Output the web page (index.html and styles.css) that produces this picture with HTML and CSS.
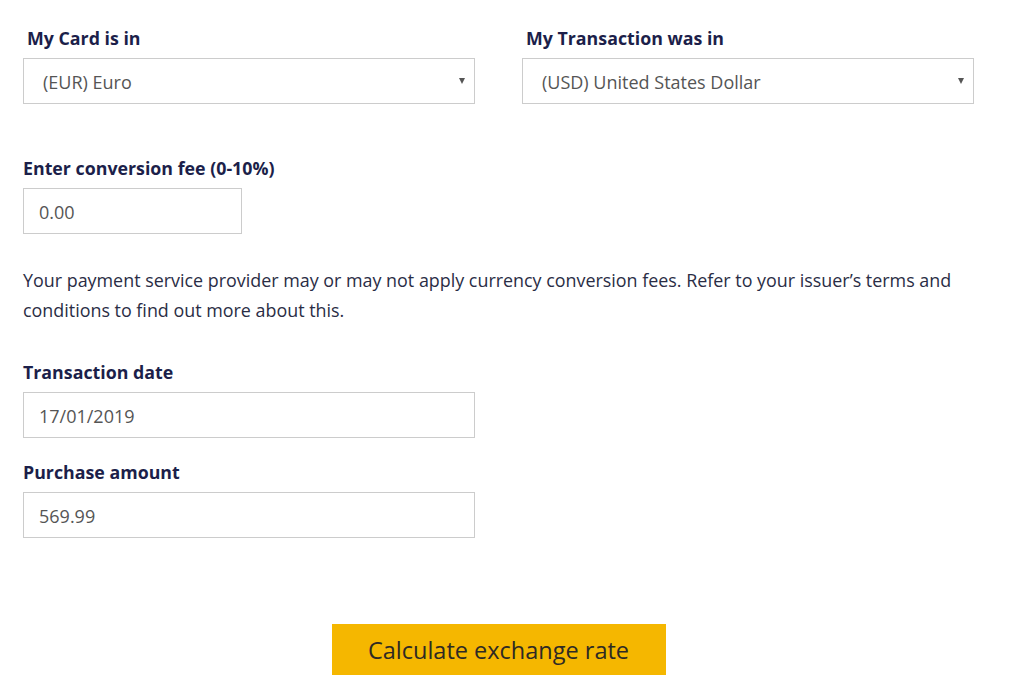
FILE: index.html
```html
<!DOCTYPE html>
<html>
  <head>
    <meta charset="utf-8" />

    <title>Currency Converter</title>

    <link rel="stylesheet" href="styles.css">
  </head>

  <body>
    <form id="converter">
      <div class="row">
        <div class="field">
          <label for="card">My Card is in</label>
          <div class="select">
            <select id="card">
              <option>(EUR) Euro</option>
            </select>
          </div>
        </div>
        <div class="field">
          <label for="transaction">My Transaction was in</label>
          <div class="select">
            <select id="transaction">
              <option>(USD) United States Dollar</option>
            </select>
          </div>
        </div>
      </div>

      <div class="field fee">
        <label for="fee">Enter conversion fee (0-10%)</label>
        <input id="fee" class="short" type="text" value="0.00">
      </div>

      <p class="note">
        Your payment service provider may or may not apply currency conversion fees. Refer to your issuer’s terms and
        conditions to find out more about this.
      </p>

      <div class="field">
        <label for="date">Transaction date</label>
        <input id="date" class="half" type="text" value="17/01/2019">
      </div>
      <div class="field amount">
        <label for="amount">Purchase amount</label>
        <input id="amount" class="half" type="text" value="569.99">
      </div>

      <div class="actions">
        <button type="button">Calculate exchange rate</button>
      </div>
    </form>
  </body>
</html>
```

FILE: styles.css
```css
body {
  margin: 0;
  font-family: 'Open Sans', 'Noto Sans', sans-serif;
  font-size: 17.9px;
  color: #2a2d45;
  background: #ffffff;
}
#converter {
  width: 951px;
  padding: 26px 0 0 23px;
}
.row {
  display: grid;
  grid-template-columns: 452px 452px;
  column-gap: 47px;
}
.field label {
  display: block;
  font-weight: 700;
  font-size: 17.8px;
  line-height: 24px;
  color: #1c1f4a;
  margin-bottom: 8px;
}
.row label {
  padding-left: 4px;
}
.fee {
  margin-top: 52px;
}
.select {
  position: relative;
  width: 452px;
}
.select::after {
  content: '';
  position: absolute;
  right: 10px;
  top: 20px;
  border-left: 3.5px solid transparent;
  border-right: 3.5px solid transparent;
  border-top: 6px solid #555555;
  pointer-events: none;
}
select,
input {
  display: block;
  box-sizing: border-box;
  height: 46px;
  margin: 0;
  border: 1px solid #cccccc;
  border-radius: 0;
  background: #ffffff;
  font-family: 'Open Sans', 'Noto Sans', sans-serif;
  font-size: 18px;
  color: #555555;
}
select {
  width: 100%;
  padding: 2px 30px 0 19px;
  appearance: none;
  -webkit-appearance: none;
}
input {
  padding: 2px 15px 0;
}
input.short {
  width: 219px;
}
input.half {
  width: 452px;
}
.note {
  margin: 31px 0 35px;
  line-height: 30px;
}
.amount {
  margin-top: 22px;
}
.actions {
  display: flex;
  justify-content: center;
  margin-top: 86px;
}
button {
  width: 334px;
  height: 51px;
  border: 0;
  border-radius: 0;
  background: #f5b700;
  font-family: 'Open Sans', 'Noto Sans', sans-serif;
  font-size: 23.5px;
  color: #2e2a24;
  cursor: pointer;
}
```
